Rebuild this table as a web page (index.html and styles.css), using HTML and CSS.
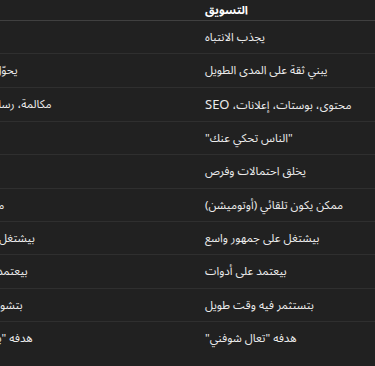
FILE: index.html
```html
<!DOCTYPE html>
<html lang="ar" dir="rtl">
<head>
<meta charset="utf-8">
<link rel="stylesheet" href="styles.css">
</head>
<body>
<div class="scroller">
  <table class="compare">
    <colgroup>
      <col class="col-marketing">
      <col class="col-sales">
    </colgroup>
    <thead>
      <tr><th>التسويق</th><th>المبيعات</th></tr>
    </thead>
    <tbody>
      <tr><td>يجذب الانتباه</td><td>يقفل الصفقة</td></tr>
      <tr><td>يبني ثقة على المدى الطويل</td><td>يحوّل الثقة لفلوس وبسرعة</td></tr>
      <tr><td>محتوى، بوستات، إعلانات، <span class="latin">SEO</span></td><td>مكالمة، رسايل، اجتماعات، عروض</td></tr>
      <tr><td>"الناس تحكي عنك"</td><td>"أنت تحكي معاهم"</td></tr>
      <tr><td>يخلق احتمالات وفرص</td><td>يقفل الفرص</td></tr>
      <tr><td>ممكن يكون تلقائي (أوتوميشن)</td><td>معظمه شخصي ومباشر</td></tr>
      <tr><td>بيشتغل على جمهور واسع</td><td>بيشتغل مع عميل واحد كل مرة</td></tr>
      <tr><td>بيعتمد على أدوات</td><td>بيعتمد على مهارات التفاوض</td></tr>
      <tr><td>بتستثمر فيه وقت طويل</td><td>بتشوف نتيجته بسرعة نسبيًا</td></tr>
      <tr><td>هدفه "تعال شوفني"</td><td>هدفه "يلا اشتري مني دلوقتي"</td></tr>
    </tbody>
  </table>
</div>
</body>
</html>
```
FILE: styles.css
```css
html, body {
  margin: 0;
  padding: 0;
  background: #212121;
}
body {
  font-family: "Noto Sans Arabic", "Noto Sans", sans-serif;
  color: #ececec;
  font-size: 11.5px;
}
.latin {
  font-family: "Noto Sans", sans-serif;
  font-size: 13px;
}
.scroller {
  width: 375px;
  height: 366px;
  overflow-x: auto;
  overflow-y: hidden;
  scrollbar-width: none;
}
.compare {
  border-collapse: collapse;
  table-layout: fixed;
  width: 487px;
}
.col-marketing { width: 180px; }
.col-sales { width: 307px; }
.compare th,
.compare td {
  text-align: left;
  padding: 6px 10px;
  line-height: 20.33px;
  white-space: nowrap;
  overflow: hidden;
}
.compare th {
  font-weight: 700;
  color: #ffffff;
  padding-top: 0;
  padding-bottom: 0;
  line-height: 20px;
  border-bottom: 1px solid #404040;
}
.compare td {
  border-bottom: 1px solid #2f2f2f;
}
.compare tbody tr:last-child td {
  border-bottom: none;
}
```
